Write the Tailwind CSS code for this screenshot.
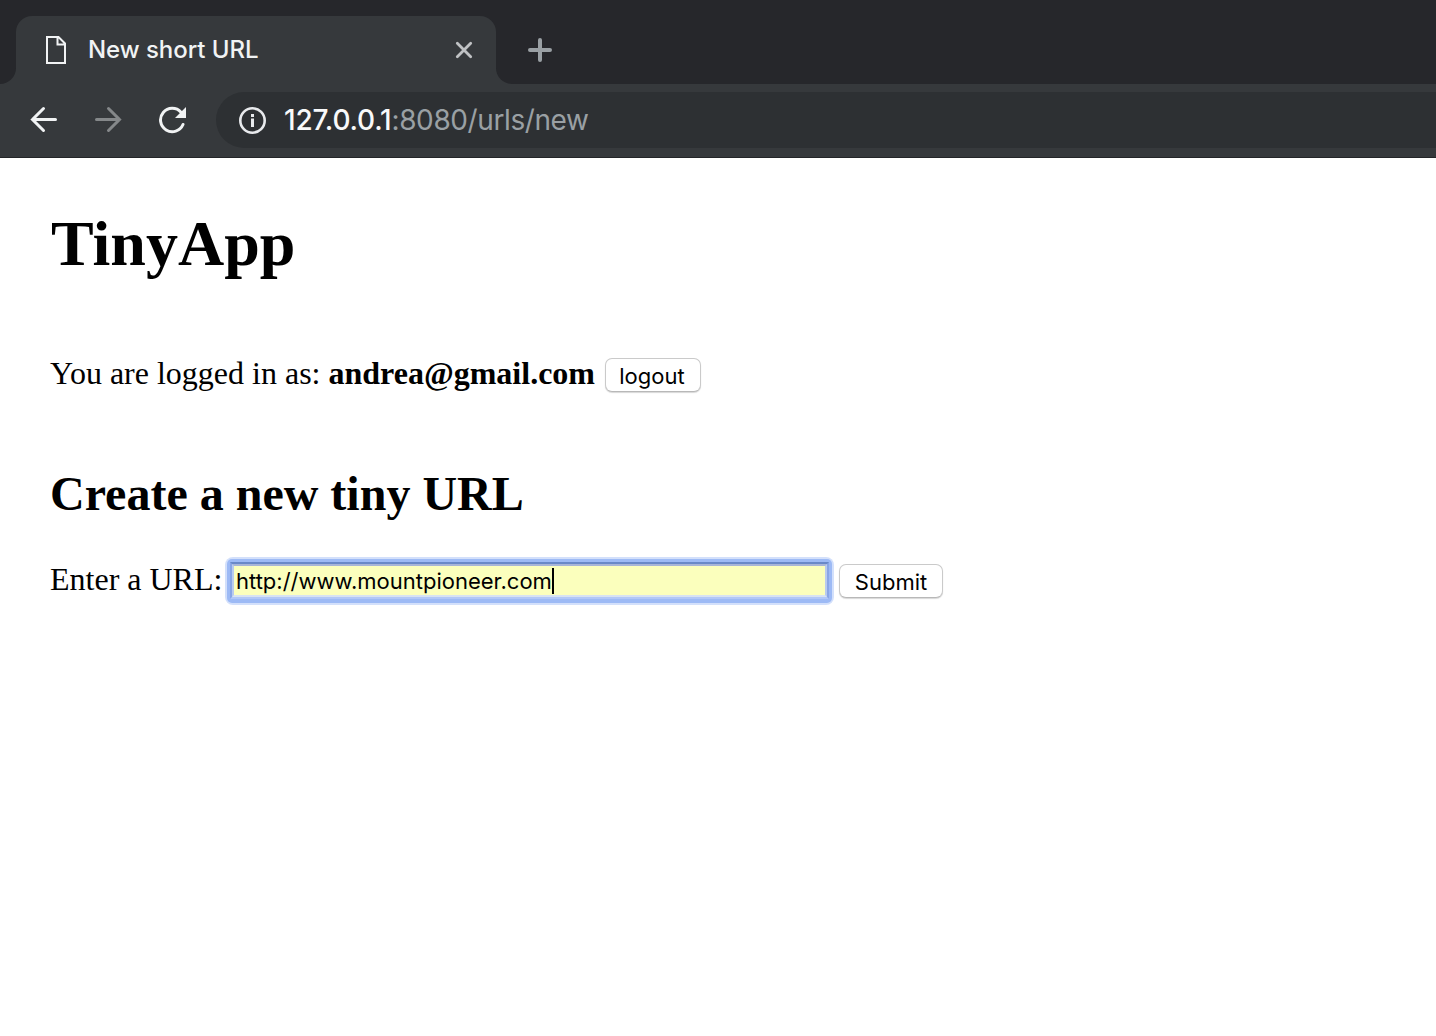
<!DOCTYPE html>
<html lang="en">
<head>
<meta charset="utf-8">
<title>New short URL</title>
<script src="https://cdn.jsdelivr.net/npm/@tailwindcss/browser@4"></script>
</head>
<body class="h-[1036px] w-[1436px] overflow-hidden bg-white text-black">
<header class="h-[158px] border-b border-[#232528] bg-[#36393c] font-[Inter,sans-serif]">
  <div class="flex h-[84px] bg-[#36393c]">
    <div class="flex w-4 flex-col bg-[#36393c]"><div class="grow rounded-br-[16px] bg-[#26272b]"></div></div>
    <div class="flex w-[480px] flex-col bg-[#26272b] pt-4">
      <div class="flex grow items-center rounded-t-[16px] bg-[#36393c] pl-[30px] pr-[22px]">
        <svg class="h-7 w-5 shrink-0" viewBox="0 0 20 28" fill="none" stroke="#f1f3f4" stroke-width="2"><path d="M1 1H12.5L19 7.5V27H1ZM11.5 1V8.5H19"/></svg>
        <span class="ml-[22px] text-[24px] font-medium leading-7 tracking-[-0.05px] text-[#f1f3f4]">New short URL</span>
        <svg class="ml-auto size-5" viewBox="0 0 20 20" stroke="#c0c2c4" stroke-width="2.8" stroke-linecap="round"><path d="M3.300 3.300L16.700 16.700M16.700 3.300L3.300 16.700"/></svg>
      </div>
    </div>
    <div class="flex grow items-center rounded-bl-[16px] bg-[#26272b] pl-8 pt-4">
      <svg class="size-6" viewBox="0 0 24 24" stroke="#9aa0a4" stroke-width="4" stroke-linecap="round"><path d="M12 2V22M2 12H22"/></svg>
    </div>
  </div>
  <div class="flex h-[72px] items-center pl-[30px]">
    <svg class="h-7 w-7" viewBox="0 0 28 28" fill="none" stroke="#f1f3f4" stroke-width="3" stroke-linecap="round"><path d="M25.500 13.500H2.500M13.500 2.500L2.500 13.500L13.500 24.500"/></svg>
    <svg class="ml-9 h-7 w-7" viewBox="0 0 28 28" fill="none" stroke="#85888a" stroke-width="3" stroke-linecap="round"><path d="M2.500 13.500H25.500M14.500 2.500L25.500 13.500L14.500 24.500"/></svg>
    <svg class="ml-9 h-7 w-7" viewBox="0 0 28 28" fill="none" stroke="#f1f3f4" stroke-width="3" stroke-linecap="round"><path d="M25 18.500A11.700 11.700 0 1 1 23 6.200"/><path d="M28 1V12H17Z" fill="#f1f3f4" stroke="none"/></svg>
    <div class="ml-[30px] flex h-14 grow items-center rounded-l-full bg-[#2d3033] pl-[23px]">
      <svg class="size-7" viewBox="0 0 28 28" fill="none" stroke="#e8eaed" stroke-width="2.600"><circle cx="13.500" cy="14.500" r="12.200"/><path d="M13.500 8V11M13.500 12.500V21" stroke-width="3"/></svg>
      <span class="ml-[17px] text-[28px] leading-8 tracking-[-0.4px] text-[#9aa0a4]"><span class="font-medium tracking-[-0.180px] text-[#f8f9fa]">127.0.0.1</span>:8080/urls/new</span>
    </div>
  </div>
</header>
<main class="pl-[50px] pt-[54px] font-['Liberation_Serif',serif]">
  <h1 class="text-[64px] font-bold leading-[64px] ml-px">TinyApp</h1>
  <div class="mt-[81px] flex h-9 items-start text-[32px] leading-8">
    <p>You are logged in as: <b>andrea@gmail.com</b></p>
    <button class="ml-[10px] mt-px h-[34px] w-24 rounded-[7px] border border-[#cacaca] border-b-[#b8b8b8] bg-white pr-[2px] pt-px font-[Inter,sans-serif] text-[22px] leading-8 shadow-[0_1px_1px_#d8d8d8]">logout</button>
  </div>
  <h2 class="mt-[77px] text-[48px] font-bold leading-[48px]">Create a new tiny URL</h2>
  <form class="mt-[39px] flex h-12 items-start text-[32px] leading-8">
    <label class="mt-[6px] w-[175px]">Enter a URL:</label>
    <div class="h-[48px] w-[609px] rounded-[8px] bg-[#d3e0fb] p-[2px]">
      <div class="h-full rounded-[5px] bg-[#9dbaf5] px-[3px] pt-[3px] pb-[4px]">
        <div class="h-full border-2 border-x-[#89a6e6] border-t-[#6989c8] border-b-[#b1c8f8]">
          <div class="flex h-full items-center border-2 border-x-[#b9cbee] border-b-[#d7e3f3] border-t-[#a7b5d8] bg-[#fbffbd] pl-[2px] pt-px font-[Inter,sans-serif] text-[22px] leading-7">
            <span>http://www.mountpioneer.com</span><span class="h-[26px] w-0.5 bg-black"></span>
          </div>
        </div>
      </div>
    </div>
    <button type="button" class="ml-[5px] mt-[7px] h-[34px] w-[104px] rounded-[7px] border border-[#cacaca] border-b-[#b8b8b8] bg-white pt-px font-[Inter,sans-serif] text-[22px] leading-8 shadow-[0_1px_1px_#d8d8d8]">Submit</button>
  </form>
</main>
</body>
</html>
